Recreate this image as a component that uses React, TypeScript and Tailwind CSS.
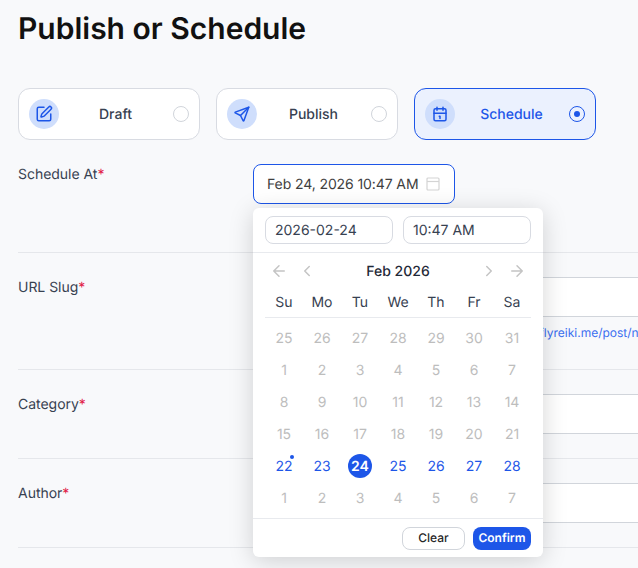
import React from "react";

const Req = () => <span className="text-[#e11d48]">*</span>;

function Row({ label, children, cls }: { label: string; children: React.ReactNode; cls: string }) {
  return (
    <div className={`flex border-b border-[#e5e7eb] ${cls}`}>
      <div className="w-[235px] shrink-0 pt-[2px] text-[14px] leading-[18px] tracking-[-0.03px] text-[#374151]">
        {label}
        <Req />
      </div>
      <div className="min-w-0 w-[500px] shrink-0">{children}</div>
    </div>
  );
}

const DraftIcon = () => (
  <svg width="18" height="18" viewBox="0 0 24 24" fill="none" stroke="#1d56e8" strokeWidth="2" strokeLinecap="round" strokeLinejoin="round">
    <path d="M12 3H5a2 2 0 0 0-2 2v14a2 2 0 0 0 2 2h14a2 2 0 0 0 2-2v-7" />
    <path d="M18.375 2.625a1 1 0 0 1 3 3l-9.013 9.014a2 2 0 0 1-.853.505l-2.873.84a.5.5 0 0 1-.62-.62l.84-2.873a2 2 0 0 1 .506-.852z" />
  </svg>
);
const SendIcon = () => (
  <svg width="18" height="18" viewBox="0 0 24 24" fill="none" stroke="#1d56e8" strokeWidth="2" strokeLinecap="round" strokeLinejoin="round">
    <path d="M10 14 21 3" />
    <path d="M21 3 14.5 21a.55.55 0 0 1-1 0L10 14l-7-3.5a.55.55 0 0 1 0-1L21 3" />
  </svg>
);
const CalIcon = () => (
  <svg width="18" height="18" viewBox="0 0 24 24" fill="none" stroke="#1d56e8" strokeWidth="2" strokeLinecap="round" strokeLinejoin="round">
    <rect x="4" y="5" width="16" height="16" rx="2" />
    <path d="M16 3v4M8 3v4M4 11h16M11 15h1v3" />
  </svg>
);

function Card({ icon, label, active }: { icon: React.ReactNode; label: string; active?: boolean }) {
  return (
    <div className={`flex h-[52px] w-[182px] items-center rounded-[12px] border pl-[10px] pr-[10px] ${active ? "border-[#1d56e8] bg-[#ebf1fe]" : "border-[#d8dbe2] bg-white"}`}>
      <div className="flex h-[30px] w-[30px] shrink-0 items-center justify-center rounded-full bg-[#cfdefc]">{icon}</div>
      <div className={`flex-1 pr-[1px] text-center text-[14px] font-medium ${active ? "text-[#1d56e8]" : "text-[#374151]"}`}>{label}</div>
      {active ? (
        <div className="flex h-4 w-4 items-center justify-center rounded-full border border-[#1d56e8]">
          <div className="h-[6px] w-[6px] rounded-full bg-[#1d56e8]" />
        </div>
      ) : (
        <div className="h-4 w-4 rounded-full border border-[#d1d5db] bg-white" />
      )}
    </div>
  );
}

const weeks = [
  ["25", "26", "27", "28", "29", "30", "31"],
  ["1", "2", "3", "4", "5", "6", "7"],
  ["8", "9", "10", "11", "12", "13", "14"],
  ["15", "16", "17", "18", "19", "20", "21"],
  ["22", "23", "24", "25", "26", "27", "28"],
  ["1", "2", "3", "4", "5", "6", "7"],
];

function Arrow({ d }: { d: string }) {
  return (
    <svg width="18" height="18" viewBox="0 0 24 24" fill="none" stroke="#c4c4c4" strokeWidth="2" strokeLinecap="round" strokeLinejoin="round">
      <path d={d} />
    </svg>
  );
}

function Popover() {
  return (
    <div className="absolute left-[253px] top-[208px] z-10 h-[349px] w-[290px] rounded-[6px] bg-white shadow-[0_4px_24px_rgba(0,0,0,0.17)]">
      <div className="flex h-[45px] gap-[10px] border-b border-[#e8eaee] px-[12px] pt-[8px]">
        <div className="flex h-[28px] w-[128px] items-center rounded-[8px] border border-[#d8dbe2] pl-[9px] text-[14px] text-[#374151]">2026-02-24</div>
        <div className="flex h-[28px] w-[128px] items-center rounded-[8px] border border-[#d8dbe2] pl-[9px] text-[14px] text-[#374151]">10:47 AM</div>
      </div>
      <div className="flex h-[36px] items-center justify-between px-[17px]">
        <div className="flex items-center gap-[10px]">
          <Arrow d="M19 12H5M12 19l-7-7 7-7" />
          <Arrow d="m15 18-6-6 6-6" />
        </div>
        <div className="text-[14px] font-medium text-[#1f2937]">Feb 2026</div>
        <div className="flex items-center gap-[10px]">
          <Arrow d="m9 18 6-6-6-6" />
          <Arrow d="M5 12h14M12 5l7 7-7 7" />
        </div>
      </div>
      <div className="mx-[12px] grid h-[29px] grid-cols-7 items-start border-b border-[#e8eaee] pt-[5px] text-center text-[14px] leading-[17px] text-[#374151]">
        {["Su", "Mo", "Tu", "We", "Th", "Fr", "Sa"].map((d) => (
          <div key={d}>{d}</div>
        ))}
      </div>
      <div className="mx-[12px] mt-[4px] h-[196px]">
        {weeks.map((w, i) => (
          <div key={i} className="grid h-[32px] grid-cols-7 place-items-center text-center text-[14px]">
            {w.map((d, j) => (
              <div
                key={j}
                className={`relative flex h-[24px] w-[24px] items-center justify-center rounded-full ${
                  i === 4 ? (d === "24" ? "bg-[#1d56e8] font-semibold text-white" : "text-[#1d56e8]") : "text-[#bdbdbd]"
                }`}
              >
                {d}
                {i === 4 && d === "22" && <span className="absolute right-[2px] top-[1px] h-[4px] w-[4px] rounded-full bg-[#1d56e8]" />}
              </div>
            ))}
          </div>
        ))}
      </div>
      <div className="flex h-[39px] items-center justify-end gap-[8px] border-t border-[#e8eaee] px-[12px]">
        <div className="flex h-[23px] w-[63px] items-center justify-center rounded-[8px] border border-[#d1d5db] text-[12px] font-medium text-[#262626]">Clear</div>
        <div className="flex h-[23px] w-[58px] items-center justify-center rounded-[8px] bg-[#1d56e8] text-[12px] font-semibold text-white">Confirm</div>
      </div>
    </div>
  );
}

export default function App() {
  return (
    <div className="relative h-[568px] w-[638px] overflow-hidden bg-[#f8f9fb] pl-[18px] font-['Inter',sans-serif] antialiased [text-rendering:geometricPrecision]">
      <h1 className="pt-[11px] text-[30px] font-semibold leading-[36px] text-[#111]">Publish or Schedule</h1>
      <div className="mt-[41px] flex gap-[16px]">
        <Card icon={<DraftIcon />} label="Draft" />
        <Card icon={<SendIcon />} label="Publish" />
        <Card icon={<CalIcon />} label="Schedule" active />
      </div>
      <div className="mt-[24px]">
        <Row label="Schedule At" cls="h-[89px]">
          <div className="flex h-[40px] w-[202px] items-center justify-between rounded-[8px] border border-[#1d56e8] bg-white pl-[13px] pr-[13px] text-[14px] tracking-[-0.1px] text-[#404040]">
            <span className="whitespace-nowrap">Feb 24, 2026 10:47 AM</span>
            <svg width="16" height="16" viewBox="0 0 16 16" fill="none" stroke="#d4d4d4" strokeWidth="1.2">
              <rect x="2" y="2" width="12" height="12" rx="1" />
              <path d="M2 5.5h12" />
            </svg>
          </div>
        </Row>
        <Row label="URL Slug" cls="h-[117px] pt-[24px]">
          <div className="h-[40px] rounded-[8px] border border-[#d1d5db] bg-white" />
          <div className="mt-[8px] whitespace-nowrap text-[12px] leading-[16px] text-[#3b6ff0]">
            Your post will be published at this address: https://flyreiki.me/post/new
          </div>
        </Row>
        <Row label="Category" cls="h-[89px] pt-[24px]">
          <div className="h-[40px] rounded-[8px] border border-[#d1d5db] bg-white" />
        </Row>
        <Row label="Author" cls="h-[89px] pt-[24px]">
          <div className="h-[40px] rounded-[8px] border border-[#d1d5db] bg-white" />
        </Row>
      </div>
      <Popover />
    </div>
  );
}
